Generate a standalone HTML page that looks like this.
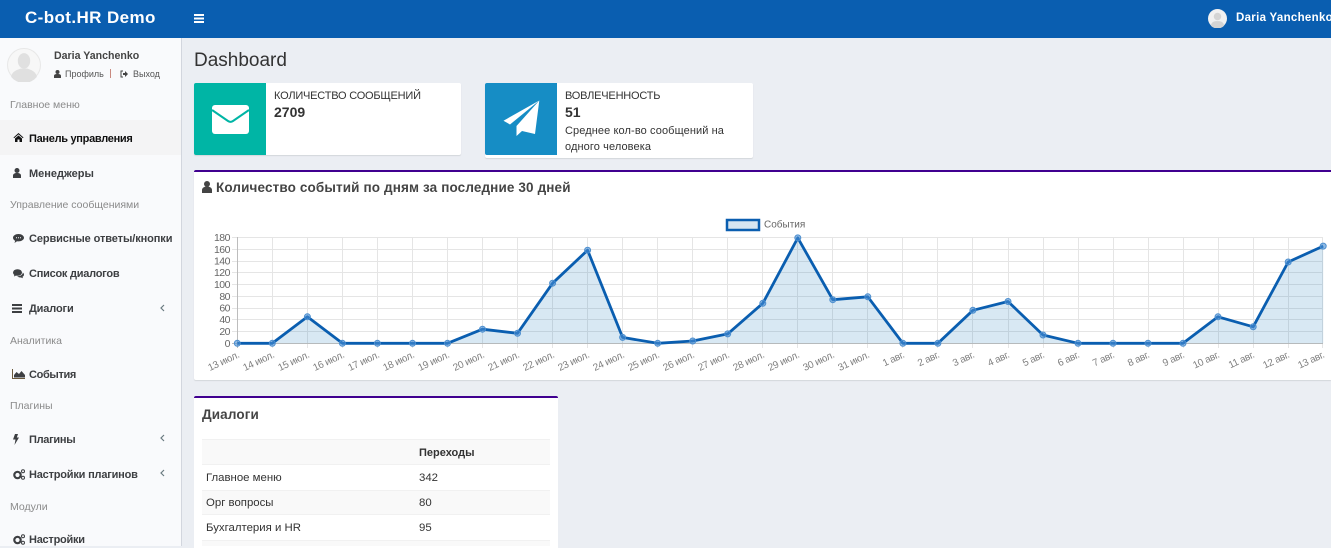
<!DOCTYPE html>
<html><head><meta charset="utf-8">
<style>
html,body{margin:0;padding:0;width:1331px;height:546px;overflow:hidden;background:#ebeef3;font-family:"Liberation Sans",sans-serif;color:#333}
.t{position:absolute;white-space:nowrap;line-height:14px;font-size:12px}
.b{font-weight:bold}
.abs{position:absolute}
.menu{font-weight:bold;font-size:11px;color:#3d3f42}
.sec{font-size:10.5px;color:#8a8a8a}
.ic{position:absolute;fill:#3d3f42}
.chev{position:absolute;left:160px;fill:none;stroke:#6a7a80;stroke-width:1.2}
svg{display:block}
</style></head><body>

<div class="abs" style="left:0;top:0;width:1331px;height:38px;background:#0a5eb0"></div>
<div class="t b" style="left:25px;top:9px;font-size:17px;line-height:18px;letter-spacing:.4px;color:#fff">C-bot.HR Demo</div>
<svg class="abs" style="left:194px;top:14px" width="10" height="9"><path fill="#fff" d="M0 0h10v2H0zM0 3.500h10v2H0zM0 7h10v2H0z"/></svg>
<svg class="abs" style="left:1208px;top:9px" width="19" height="19" viewBox="0 0 33 33"><circle cx="16.500" cy="16.500" r="16.500" fill="#f1f1f1"/><circle cx="16.500" cy="13" r="6.500" fill="#d4d4d4"/><path fill="#d4d4d4" d="M5 29c1-7 6-8 11.500-8s10.500 1 11.500 8a16 16 0 0 1-23 0z"/></svg>
<div class="t b" style="left:1236px;top:11px;font-size:11.5px;letter-spacing:.3px;color:#fff">Daria Yanchenko</div>

<div class="abs" style="left:0;top:38px;width:181px;height:508px;background:#f9fafc;border-right:1px solid #d2d6de"></div>
<svg class="abs" style="left:7px;top:48px" width="34" height="34" viewBox="0 0 33 33"><circle cx="16.500" cy="16.500" r="16" fill="#f7f7f7" stroke="#e8e8e8"/><ellipse cx="16.500" cy="12.500" rx="6" ry="7.500" fill="#e0e0e0"/><path fill="#e0e0e0" d="M4 28c1-6 7-7 9-8h7c2 1 8 2 9 8a16 16 0 0 1-25 0z"/></svg>
<div class="t b" style="left:54px;top:49px;font-size:10.6px;color:#444">Daria Yanchenko</div>
<svg class="abs" style="left:54px;top:70px" width="7" height="8" viewBox="0 0 7 8"><circle cx="3.500" cy="2" r="2" fill="#444"/><path fill="#444" d="M0 8V6c0-1.500 1-2 3.500-2S7 4.500 7 6v2z"/></svg>
<div class="t" style="left:65px;top:67px;font-size:9px;color:#555">Профиль</div>
<div class="abs" style="left:110px;top:69px;width:1px;height:9px;background:#c98a80"></div>
<svg class="abs" style="left:120px;top:70px" width="8" height="8" viewBox="0 0 8 8"><path fill="none" stroke="#444" d="M3 1H1v6h2"/><path fill="#444" d="M3 3h2V1l3 3-3 3V5H3z"/></svg>
<div class="t" style="left:133px;top:67px;font-size:9px;color:#555">Выход</div>

<div class="t sec" style="left:10px;top:98px">Главное меню</div>
<div class="abs" style="left:0;top:120px;width:181px;height:35px;background:#f4f4f5"></div>
<svg class="ic" style="left:13px;top:133px;fill:#111" width="11" height="9" viewBox="0 0 10 9"><path d="M5 0L0 4.500l.6.700L5 1.400l4.400 3.800.6-.7zM1.500 5.500V9h2.500V6.500h2V9h2.500V5.500L5 2.500z"/></svg>
<div class="t menu" style="left:29px;top:132px;color:#111;letter-spacing:-.3px">Панель управления</div>

<svg class="ic" style="left:13px;top:168px" width="8" height="10" viewBox="0 0 8 10"><circle cx="4" cy="2.500" r="2.500"/><path d="M0 10V7.500C0 6 1.500 5 4 5s4 1 4 2.500V10z"/></svg>
<div class="t menu" style="left:29px;top:167px">Менеджеры</div>

<div class="t sec" style="left:10px;top:198px">Управление сообщениями</div>

<svg class="ic" style="left:13px;top:234px" width="11" height="10" viewBox="0 0 11 10"><path d="M5.500 0C2.500 0 0 1.600 0 3.800c0 1.300.9 2.400 2.200 3L1.500 9l2.500-1.700c.5.100 1 .1 1.500.1 3 0 5.500-1.600 5.500-3.600S8.500 0 5.500 0z"/><path fill="#f9fafc" d="M3 3.300h1v1H3zM5 3.300h1v1H5zM7 3.300h1v1H7z"/></svg>
<div class="t menu" style="left:29px;top:232px;letter-spacing:-.1px">Сервисные ответы/кнопки</div>

<svg class="ic" style="left:13px;top:269px" width="11" height="10" viewBox="0 0 11 10"><ellipse cx="4.500" cy="3.500" rx="4.500" ry="3.300"/><path d="M1.500 5l-.5 2.500L4 6z"/><path d="M9.800 3.500c.8.600 1.200 1.300 1.200 2.100 0 .9-.6 1.700-1.500 2.200l.4 1.500L8 8.500c-1.700.1-3-.3-3.800-1.200 3 0 5.600-1.500 5.600-3.800z"/></svg>
<div class="t menu" style="left:29px;top:267px;letter-spacing:-.25px">Список диалогов</div>

<svg class="ic" style="left:12px;top:304px" width="10" height="9" viewBox="0 0 10 9"><path d="M0 0h10v2H0zM0 3.500h10v2H0zM0 7h10v2H0z"/></svg>
<div class="t menu" style="left:29px;top:302px;letter-spacing:-.15px">Диалоги</div>
<svg class="chev" style="top:304px" width="5" height="8"><path d="M4 1L1 4l3 3"/></svg>

<div class="t sec" style="left:10px;top:334px">Аналитика</div>

<svg class="ic" style="left:12px;top:369px" width="13" height="10" viewBox="0 0 13 10"><path d="M0 0h1v9h12v1H0z" fill="#6b5a3c"/><path d="M2 8.500V6l2.500-3L7 5l2.500-3L13 6v2.500z"/></svg>
<div class="t menu" style="left:29px;top:368px;letter-spacing:-.35px">События</div>

<div class="t sec" style="left:10px;top:399px">Плагины</div>

<svg class="ic" style="left:13px;top:434px" width="6" height="11" viewBox="0 0 6 11"><path d="M2 0h3L3.800 3.500H6L1.500 11l1-5.500H0z"/></svg>
<div class="t menu" style="left:29px;top:433px;letter-spacing:-.3px">Плагины</div>
<svg class="chev" style="top:434px" width="5" height="8"><path d="M4 1L1 4l3 3"/></svg>

<svg class="ic" style="left:13px;top:469px" width="12" height="11" viewBox="0 0 12 11"><circle cx="4.500" cy="6" r="3.200" fill="none" stroke="#3d3f42" stroke-width="2.200"/><circle cx="10" cy="2.200" r="1.500" fill="none" stroke="#3d3f42"/><circle cx="10" cy="8.800" r="1.500" fill="none" stroke="#3d3f42"/></svg>
<div class="t menu" style="left:29px;top:468px;letter-spacing:-.2px">Настройки плагинов</div>
<svg class="chev" style="top:469px" width="5" height="8"><path d="M4 1L1 4l3 3"/></svg>

<div class="t sec" style="left:10px;top:500px">Модули</div>

<svg class="ic" style="left:13px;top:534px" width="12" height="11" viewBox="0 0 12 11"><circle cx="4.500" cy="6" r="3.200" fill="none" stroke="#3d3f42" stroke-width="2.200"/><circle cx="10" cy="2.200" r="1.500" fill="none" stroke="#3d3f42"/><circle cx="10" cy="8.800" r="1.500" fill="none" stroke="#3d3f42"/></svg>
<div class="t menu" style="left:29px;top:533px;letter-spacing:-.25px">Настройки</div>

<div class="t" style="left:194px;top:49px;font-size:19px;line-height:24px;color:#333">Dashboard</div>

<div class="abs" style="left:194px;top:83px;width:267px;height:72px;background:#fff;border-radius:2px;box-shadow:0 1px 1px rgba(0,0,0,.1)"></div>
<div class="abs" style="left:194px;top:83px;width:72px;height:72px;background:#00b5a5;border-radius:2px 0 0 2px"></div>
<svg class="abs" style="left:212px;top:105px" width="37" height="29" viewBox="0 0 37 29"><rect width="37" height="29" rx="3" fill="#fff"/><path d="M0 5l16 11c1.500 1 3.500 1 5 0L37 5" fill="none" stroke="#00b5a5" stroke-width="2"/></svg>
<div class="t" style="left:274px;top:89px;font-size:11px;letter-spacing:-.2px">КОЛИЧЕСТВО СООБЩЕНИЙ</div>
<div class="t b" style="left:274px;top:105px;font-size:14px">2709</div>

<div class="abs" style="left:485px;top:83px;width:268px;height:75px;background:#fff;border-radius:2px;box-shadow:0 1px 1px rgba(0,0,0,.1)"></div>
<div class="abs" style="left:485px;top:83px;width:72px;height:72px;background:#168dc5;border-radius:2px 0 0 2px"></div>
<svg class="abs" style="left:502px;top:100px" width="38" height="37" viewBox="0 0 38 37"><path fill="#fff" d="M37.300.5L1.500 20.700 8 24.500z"/><path fill="#fff" d="M37.300.5L14.500 26v10l5.500-5 13 3z"/></svg>
<div class="t" style="left:565px;top:89px;font-size:11px;letter-spacing:-.2px">ВОВЛЕЧЕННОСТЬ</div>
<div class="t b" style="left:565px;top:105px;font-size:14px">51</div>
<div class="t" style="left:565px;top:124px;font-size:11px;letter-spacing:.1px">Среднее кол-во сообщений на</div>
<div class="t" style="left:565px;top:140px;font-size:11px;letter-spacing:.1px">одного человека</div>

<div class="abs" style="left:194px;top:170px;width:1137px;height:208px;background:#fff;border-top:2px solid #400090;border-radius:2px 0 0 2px;box-shadow:0 1px 1px rgba(0,0,0,.1)"></div>
<svg class="abs" style="left:202px;top:181px" width="10" height="12" viewBox="0 0 10 12"><circle cx="5" cy="3" r="3" fill="#444"/><path fill="#444" d="M0 12V9c0-2 2-3.500 5-3.500S10 7 10 9v3z"/></svg>
<div class="t b" style="left:216px;top:181px;font-size:13.5px;letter-spacing:.13px;color:#444">Количество событий по дням за последние 30 дней</div>

<svg class="abs" style="left:0;top:0" width="1331" height="380" font-family="'Liberation Sans',sans-serif" font-size="11.500" fill="#666">
<g stroke="#e5e5e5" stroke-width="1" fill="none">
<path d="M232 237.500H1323M232 249.500H1323M232 261.500H1323M232 272.500H1323M232 284.500H1323M232 296.500H1323M232 308.500H1323M232 319.500H1323M232 331.500H1323"/>
<path d="M272.500 237V348M307.500 237V348M342.500 237V348M377.500 237V348M412.500 237V348M447.500 237V348M482.500 237V348M517.500 237V348M552.500 237V348M587.500 237V348M622.500 237V348M657.500 237V348M692.500 237V348M727.500 237V348M762.500 237V348M797.500 237V348M832.500 237V348M867.500 237V348M902.500 237V348M937.500 237V348M972.500 237V348M1008.500 237V348M1043.500 237V348M1078.500 237V348M1113.500 237V348M1148.500 237V348M1183.500 237V348M1218.500 237V348M1253.500 237V348M1288.500 237V348M1322.500 237V348"/>
</g>
<path d="M237.500 237V348M232 343.500H1323" stroke="#bdbdbd" fill="none"/>
<path fill="rgba(10,110,180,.16)" d="M237.300 343.300L272.300 343.300L307.400 316.800L342.400 343.300L377.400 343.300L412.500 343.300L447.500 343.300L482.500 329.200L517.500 333.300L552.600 283.200L587.600 250.200L622.600 337.400L657.700 343.300L692.700 341L727.700 333.900L762.800 303.300L797.800 237.900L832.800 299.700L867.800 296.800L902.900 343.300L937.900 343.300L972.900 310.300L1008 301.500L1043 335L1078 343.300L1113 343.300L1148 343.300L1183 343.300L1218 316.800L1253.200 326.800L1288.200 262L1323.200 246.100V343.300Z"/>
<path fill="none" stroke="#0a5eb0" stroke-width="2.800" stroke-linejoin="round" d="M237.300 343.300L272.300 343.300L307.400 316.800L342.400 343.300L377.400 343.300L412.500 343.300L447.500 343.300L482.500 329.200L517.500 333.300L552.600 283.200L587.600 250.200L622.600 337.400L657.700 343.300L692.700 341L727.700 333.900L762.800 303.300L797.800 237.900L832.800 299.700L867.800 296.800L902.900 343.300L937.900 343.300L972.900 310.300L1008 301.500L1043 335L1078 343.300L1113 343.300L1148 343.300L1183 343.300L1218 316.800L1253.200 326.800L1288.200 262L1323.200 246.100"/>
<g fill="rgba(70,140,210,.6)" stroke="#4d8fcf" stroke-width="1">
<circle cx="237.300" cy="343.300" r="3"/><circle cx="272.300" cy="343.300" r="3"/><circle cx="307.400" cy="316.800" r="3"/><circle cx="342.400" cy="343.300" r="3"/><circle cx="377.400" cy="343.300" r="3"/><circle cx="412.500" cy="343.300" r="3"/><circle cx="447.500" cy="343.300" r="3"/><circle cx="482.500" cy="329.200" r="3"/><circle cx="517.500" cy="333.300" r="3"/><circle cx="552.600" cy="283.200" r="3"/><circle cx="587.600" cy="250.200" r="3"/><circle cx="622.600" cy="337.400" r="3"/><circle cx="657.700" cy="343.300" r="3"/><circle cx="692.700" cy="341" r="3"/><circle cx="727.700" cy="333.900" r="3"/><circle cx="762.800" cy="303.300" r="3"/><circle cx="797.800" cy="237.900" r="3"/><circle cx="832.800" cy="299.700" r="3"/><circle cx="867.800" cy="296.800" r="3"/><circle cx="902.900" cy="343.300" r="3"/><circle cx="937.900" cy="343.300" r="3"/><circle cx="972.900" cy="310.300" r="3"/><circle cx="1008" cy="301.500" r="3"/><circle cx="1043" cy="335" r="3"/><circle cx="1078" cy="343.300" r="3"/><circle cx="1113" cy="343.300" r="3"/><circle cx="1148" cy="343.300" r="3"/><circle cx="1183" cy="343.300" r="3"/><circle cx="1218" cy="316.800" r="3"/><circle cx="1253.200" cy="326.800" r="3"/><circle cx="1288.200" cy="262" r="3"/><circle cx="1323.200" cy="246.100" r="3"/>
</g>
<rect x="727" y="220" width="32" height="10" fill="#d6e5f1" stroke="#0a5eb0" stroke-width="2.500"/>
<text x="764" y="227.500" font-size="10">События</text>
<g text-anchor="end" font-size="10.500" letter-spacing="-.5">
<text x="230" y="241">180</text><text x="230" y="253">160</text><text x="230" y="264.500">140</text><text x="230" y="276">120</text><text x="230" y="288">100</text><text x="230" y="300">80</text><text x="230" y="311.500">60</text><text x="230" y="323">40</text><text x="230" y="335">20</text><text x="230" y="347">0</text>
</g>
<g text-anchor="end" font-size="10" letter-spacing="-.3" fill="#808080">
<text transform="translate(240 357) rotate(-25)">13 июл.</text>
<text transform="translate(275 357) rotate(-25)">14 июл.</text>
<text transform="translate(310 357) rotate(-25)">15 июл.</text>
<text transform="translate(345 357) rotate(-25)">16 июл.</text>
<text transform="translate(380 357) rotate(-25)">17 июл.</text>
<text transform="translate(415 357) rotate(-25)">18 июл.</text>
<text transform="translate(450 357) rotate(-25)">19 июл.</text>
<text transform="translate(485 357) rotate(-25)">20 июл.</text>
<text transform="translate(520 357) rotate(-25)">21 июл.</text>
<text transform="translate(555 357) rotate(-25)">22 июл.</text>
<text transform="translate(590 357) rotate(-25)">23 июл.</text>
<text transform="translate(625 357) rotate(-25)">24 июл.</text>
<text transform="translate(660 357) rotate(-25)">25 июл.</text>
<text transform="translate(695 357) rotate(-25)">26 июл.</text>
<text transform="translate(730 357) rotate(-25)">27 июл.</text>
<text transform="translate(765 357) rotate(-25)">28 июл.</text>
<text transform="translate(800 357) rotate(-25)">29 июл.</text>
<text transform="translate(835 357) rotate(-25)">30 июл.</text>
<text transform="translate(870 357) rotate(-25)">31 июл.</text>
<text transform="translate(905 357) rotate(-25)">1 авг.</text>
<text transform="translate(940 357) rotate(-25)">2 авг.</text>
<text transform="translate(975 357) rotate(-25)">3 авг.</text>
<text transform="translate(1010 357) rotate(-25)">4 авг.</text>
<text transform="translate(1045 357) rotate(-25)">5 авг.</text>
<text transform="translate(1080 357) rotate(-25)">6 авг.</text>
<text transform="translate(1115 357) rotate(-25)">7 авг.</text>
<text transform="translate(1150 357) rotate(-25)">8 авг.</text>
<text transform="translate(1185 357) rotate(-25)">9 авг.</text>
<text transform="translate(1220 357) rotate(-25)">10 авг.</text>
<text transform="translate(1255 357) rotate(-25)">11 авг.</text>
<text transform="translate(1290 357) rotate(-25)">12 авг.</text>
<text transform="translate(1325 357) rotate(-25)">13 авг.</text>
</g>
</svg>

<div class="abs" style="left:194px;top:396px;width:364px;height:150px;background:#fff;border-top:2px solid #400090;border-radius:2px 2px 0 0"></div>
<div class="t b" style="left:202px;top:408px;font-size:13.5px;letter-spacing:.13px;color:#444">Диалоги</div>
<div class="abs" style="left:202px;top:439px;width:348px;height:26px;background:#f9f9f9;border-top:1px solid #f1f1f1;border-bottom:1px solid #f1f1f1;box-sizing:border-box"></div>
<div class="abs" style="left:202px;top:490px;width:348px;height:25px;background:#f9f9f9;border-top:1px solid #f1f1f1;border-bottom:1px solid #f1f1f1;box-sizing:border-box"></div>
<div class="abs" style="left:202px;top:540px;width:348px;height:6px;background:#f9f9f9;border-top:1px solid #f1f1f1;box-sizing:border-box"></div>
<div class="t b" style="left:419px;top:446px;font-size:11px">Переходы</div>
<div class="t" style="left:206px;top:471px;font-size:11.400px">Главное меню</div>
<div class="t" style="left:419px;top:471px;font-size:11.400px">342</div>
<div class="t" style="left:206px;top:496px;font-size:11.400px">Орг вопросы</div>
<div class="t" style="left:419px;top:496px;font-size:11.400px">80</div>
<div class="t" style="left:206px;top:521px;font-size:11.400px">Бухгалтерия и HR</div>
<div class="t" style="left:419px;top:521px;font-size:11.400px">95</div>

</body></html>
